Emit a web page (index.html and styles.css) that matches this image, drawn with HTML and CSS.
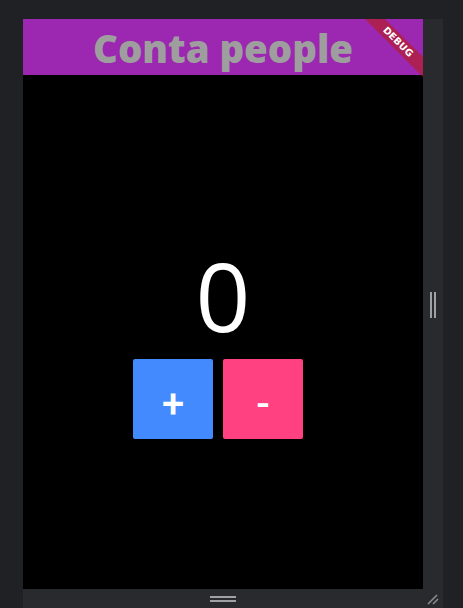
FILE: index.html
```html
<!DOCTYPE html>
<html>
<head>
<meta charset="utf-8">
<link rel="stylesheet" href="styles.css">
</head>
<body>
<div class="frame">
  <div class="top">
    <div class="app">
      <header class="appbar">
        <h1 class="title">Conta people</h1>
        <div class="banner"><span>DEBUG</span></div>
      </header>
      <main class="content">
        <div class="count">0</div>
        <div class="buttons">
          <button class="btn plus">+</button>
          <button class="btn minus">-</button>
        </div>
      </main>
    </div>
    <div class="side">
      <div class="vhandle"></div>
    </div>
  </div>
  <div class="bottom">
    <div class="hhandle"></div>
    <svg class="corner" width="14" height="14" viewBox="0 0 14 14">
      <line x1="2" y1="12" x2="11" y2="3" stroke="#8a8b8e" stroke-width="1.6"/>
      <line x1="7" y1="12" x2="12" y2="7" stroke="#8a8b8e" stroke-width="1.6"/>
    </svg>
  </div>
</div>
</body>
</html>
```
FILE: styles.css
```css
html, body {
  margin: 0;
  padding: 0;
  background: #202124;
  width: 463px;
  height: 608px;
  overflow: hidden;
}
.frame {
  margin: 19px 0 0 23px;
  width: 420px;
  height: 589px;
  background: #292a2d;
  display: flex;
  flex-direction: column;
}
.top {
  display: flex;
  height: 570px;
}
.app {
  width: 400px;
  height: 570px;
  background: #000;
  display: flex;
  flex-direction: column;
  position: relative;
  overflow: hidden;
}
.appbar {
  height: 56px;
  background: #9c27b0;
  display: flex;
  align-items: center;
  justify-content: center;
}
.title {
  margin: 0;
  font-family: "Open Sans", sans-serif;
  font-weight: 800;
  font-size: 38.5px;
  color: #9e9e9e;
  line-height: 1;
  letter-spacing: -0.1px;
  margin-top: 2px;
}
.banner {
  position: absolute;
  top: 0;
  right: 0;
  width: 64px;
  height: 64px;
  overflow: hidden;
}
.banner span {
  position: absolute;
  top: 16px;
  right: -25px;
  width: 100px;
  height: 14px;
  background: rgba(183, 28, 28, 0.63);
  transform: rotate(45deg);
  color: #fff;
  font-family: "DejaVu Sans", sans-serif;
  font-weight: 700;
  font-size: 9.5px;
  line-height: 14px;
  text-align: center;
  letter-spacing: 0.2px;
}
.content {
  flex: 1;
  display: flex;
  flex-direction: column;
  align-items: center;
  justify-content: center;
  padding-top: 17px;
}
.count {
  font-family: "Open Sans", sans-serif;
  font-weight: 400;
  font-size: 96px;
  line-height: 110px;
  color: #fff;
  margin-bottom: 9px;
  margin-top: -3px;
}
.buttons {
  display: flex;
  gap: 10px;
  margin-right: 10px;
  margin-bottom: -1px;
}
.btn {
  width: 80px;
  height: 80px;
  border: 0;
  border-radius: 2px;
  color: #fff;
  font-family: "Roboto", sans-serif;
  font-weight: 500;
  font-size: 40px;
  line-height: 68px;
  padding: 12px 0 0 0;
}
.plus { background: #448aff; }
.minus { background: #ff4081; }
.side {
  width: 20px;
  display: flex;
  align-items: center;
  justify-content: center;
}
.vhandle {
  width: 2px;
  height: 26px;
  border-left: 2px solid #a0a1a4;
  border-right: 2px solid #a0a1a4;
  margin-top: 1px;
}
.bottom {
  height: 19px;
  position: relative;
  display: flex;
  justify-content: center;
  align-items: center;
}
.hhandle {
  width: 26px;
  height: 2px;
  border-top: 2px solid #a0a1a4;
  border-bottom: 2px solid #a0a1a4;
  margin-left: -20px;
}
.corner {
  position: absolute;
  right: 3px;
  bottom: 2px;
}
```
